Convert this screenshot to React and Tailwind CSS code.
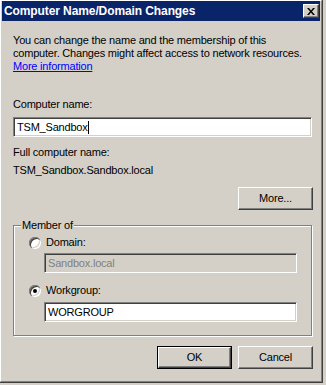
import React from "react";

const font = { fontFamily: '"Liberation Sans", Arial, sans-serif' };

function Sunken({ children, disabled }) {
  return (
    <div
      className={
        "h-[20px] flex items-center pl-[3px] text-[11px] border border-t-[#808080] border-l-[#808080] border-b-white border-r-white shadow-[inset_1px_1px_0_#404040,inset_-1px_-1px_0_#d4d0c8] " +
        (disabled ? "bg-[#d4d0c8] text-[#808080]" : "bg-white text-black")
      }
    >
      {children}
    </div>
  );
}

function Button({ label, isDefault }) {
  return (
    <div
      className={
        "w-[75px] h-[23px] " + (isDefault ? "border border-black" : "")
      }
    >
      <div className="w-full h-full flex items-center justify-center text-[11px] text-black bg-[#d4d0c8] border border-t-white border-l-white border-r-[#404040] border-b-[#404040] shadow-[inset_-1px_-1px_0_#808080]">
        {label}
      </div>
    </div>
  );
}

function Radio({ checked }) {
  return (
    <div className="w-[12px] h-[12px] rounded-full bg-white flex items-center justify-center shadow-[inset_1px_1px_0_#808080,inset_2px_2px_0_#404040,inset_-1px_-1px_0_#ffffff,inset_-2px_-2px_0_#d4d0c8]">
      {checked && <div className="w-[4px] h-[4px] rounded-full bg-black" />}
    </div>
  );
}

function App() {
  return (
    <div className="w-[326px] h-[385px] bg-[#d4d0c8]" style={font}>
      <div className="w-[323px] h-[383px] border-r border-b border-[#404040]">
        <div className="w-full h-full flex flex-col border-t border-l border-t-white border-l-white border-r border-b border-r-[#808080] border-b-[#808080] pl-px pr-px bg-[#d4d0c8]">
          {/* title bar */}
          <div className="h-[20px] bg-[#0a246a] flex items-center justify-between pl-[2px] pr-px">
            <span className="text-white font-bold text-[12px] leading-[20px] tracking-[-0.1px]">
              Computer Name/Domain Changes
            </span>
            <div className="w-[16px] h-[14px] bg-[#d4d0c8] border border-t-white border-l-white border-r-[#404040] border-b-[#404040] shadow-[inset_-1px_-1px_0_#808080] flex items-center justify-center">
              <svg width="8" height="7" viewBox="0 0 8 7">
                <path d="M0 0h2l2 2.5L6 0h2L5 3.5 8 7H6L4 4.5 2 7H0l3-3.5z" fill="#000" />
              </svg>
            </div>
          </div>

          <div className="flex flex-col pl-[11px] pr-[8px] text-[11px] text-black tracking-[-0.2px] whitespace-nowrap">
            <p className="mt-[13px] leading-[13px]">
              You can change the name and the membership of this
              <br />
              computer. Changes might affect access to network resources.
              <br />
              <span className="text-[#0000ff] underline">More information</span>
            </p>

            <div className="mt-[25px] leading-[13px]">Computer name:</div>
            <div className="mt-[6px]">
              <Sunken>
                TSM_Sandbox
                <span className="w-px h-[13px] bg-black" />
              </Sunken>
            </div>

            <div className="mt-[9px] leading-[13px]">Full computer name:</div>
            <div className="mt-[5px] leading-[13px]">TSM_Sandbox.Sandbox.local</div>

            <div className="mt-[10px] flex justify-end -mr-px">
              <Button label="More..." />
            </div>

            {/* group box */}
            <div className="relative mt-[15px] h-[111px] border border-[#808080] shadow-[inset_1px_1px_0_#fff,1px_1px_0_#fff] pl-[15px] pt-[10px] flex flex-col">
              <span className="absolute left-[7px] -top-[7px] leading-[13px] px-px bg-[#d4d0c8]">
                Member of
              </span>
              <div className="flex items-center gap-[5px] h-[13px]">
                <Radio />
                <span className="leading-[13px]">Domain:</span>
              </div>
              <div className="mt-[4px] ml-[15px] w-[253px]">
                <Sunken disabled>Sandbox.local</Sunken>
              </div>
              <div className="mt-[11px] flex items-center gap-[5px] h-[13px]">
                <Radio checked />
                <span className="leading-[13px]">Workgroup:</span>
              </div>
              <div className="mt-[5px] ml-[15px] w-[253px]">
                <Sunken>WORGROUP</Sunken>
              </div>
            </div>

            <div className="mt-[10px] flex justify-end gap-[6px] -mr-px">
              <Button label="OK" isDefault />
              <Button label="Cancel" />
            </div>
          </div>
        </div>
      </div>
    </div>
  );
}

export default App;
